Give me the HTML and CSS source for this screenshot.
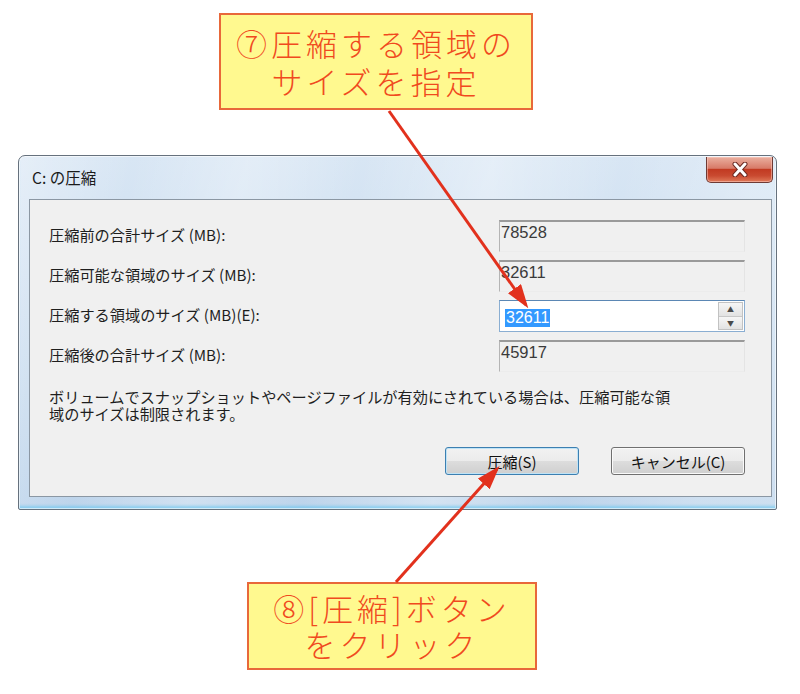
FILE: index.html
```html
<!DOCTYPE html>
<html lang="ja">
<head>
    <meta charset="utf-8">
    <link rel="stylesheet" href="styles.css">
</head>
<body>
    <div class="page">
        <div class="callout callout-top">⑦圧縮する領域の<br>サイズを指定</div>

        <div class="window">
            <div class="titlebar">
                <span class="title">C: の圧縮</span>
                <div class="close-btn">
                    <svg width="18" height="15" viewBox="0 0 18 15">
                        <path d="M4 2 L14 13 M14 2 L4 13" stroke="#6b2a22" stroke-width="5" stroke-linecap="round"/>
                        <path d="M4 2 L14 13 M14 2 L4 13" stroke="#ffffff" stroke-width="3" stroke-linecap="round"/>
                    </svg>
                </div>
            </div>

            <div class="panel">
                <div class="form">
                    <label>圧縮前の合計サイズ (MB):</label>
                    <div class="field">78528</div>

                    <label>圧縮可能な領域のサイズ (MB):</label>
                    <div class="field">32611</div>

                    <label>圧縮する領域のサイズ (MB)(E):</label>
                    <div class="spin">
                        <div class="spin-text"><span class="sel">32611</span></div>
                        <div class="spin-btns">
                            <span class="spin-up">▲</span>
                            <span class="spin-down">▼</span>
                        </div>
                    </div>

                    <label>圧縮後の合計サイズ (MB):</label>
                    <div class="field">45917</div>
                </div>

                <p class="note">ボリュームでスナップショットやページファイルが有効にされている場合は、圧縮可能な領<br>域のサイズは制限されます。</p>

                <div class="actions">
                    <div class="btn btn-default">圧縮(S)</div>
                    <div class="btn">キャンセル(C)</div>
                </div>
            </div>
        </div>

        <div class="callout callout-bottom">⑧[圧縮]ボタン<br>をクリック</div>

        <!-- pointer arrows drawn over the screenshot -->
        <svg class="arrows" width="800" height="694" viewBox="0 0 800 694">
            <defs>
                <marker id="head" viewBox="0 0 12 8" refX="10" refY="4" markerWidth="8" markerHeight="5.4" orient="auto" markerUnits="strokeWidth">
                    <path d="M0 0 L12 4 L0 8 z" fill="#e2311d"/>
                </marker>
            </defs>
            <line x1="389" y1="111" x2="526" y2="305" stroke="#e2311d" stroke-width="3" marker-end="url(#head)"/>
            <line x1="396" y1="582" x2="497" y2="469" stroke="#e2311d" stroke-width="3" marker-end="url(#head)"/>
        </svg>
    </div>
</body>
</html>
```

FILE: styles.css
```css
* {
    margin: 0;
    padding: 0;
    box-sizing: border-box;
}

body {
    background: #ffffff;
    font-family: "Noto Sans CJK JP", "Noto Sans", sans-serif;
}

.page {
    position: relative;
    width: 800px;
    height: 694px;
    padding-top: 13px;
    overflow: hidden;
}

/* yellow notes */
.callout {
    display: flex;
    align-items: center;
    justify-content: center;
    background: #fff98f;
    border: 2px solid #e8683a;
    color: #f04a1e;
    font-size: 31px;
    font-weight: 300;
    line-height: 38px;
    letter-spacing: 4px;
    text-align: center;
}

.callout-top {
    width: 314px;
    height: 97px;
    margin-left: 219px;
}

.callout-bottom {
    width: 290px;
    height: 88px;
    margin: 72px 0 0 247px;
    line-height: 36px;
}

/* dialog frame */
.window {
    display: flex;
    flex-direction: column;
    width: 759px;
    height: 355px;
    margin: 45px 0 0 18px;
    padding: 0 4px 12px 10px;
    border: 1px solid #66717d;
    border-radius: 7px 7px 2px 2px;
    background:
        linear-gradient(100deg, rgba(255,255,255,0.35) 0%, rgba(255,255,255,0) 14%, rgba(255,255,255,0.3) 28%, rgba(255,255,255,0) 42%, rgba(255,255,255,0.35) 58%, rgba(255,255,255,0) 74%, rgba(255,255,255,0.25) 90%),
        linear-gradient(#d8e6f4, #bdd4eb);
    box-shadow: inset 0 0 0 1px rgba(255,255,255,0.6), inset 0 -4px 3px -1px rgba(110,200,240,0.7);
}

.titlebar {
    display: flex;
    justify-content: space-between;
    align-items: flex-start;
    height: 43px;
    padding-left: 3px;
}

.title {
    padding-top: 11px;
    font-size: 15.5px;
    line-height: 20px;
    color: #1a1a1a;
}

.close-btn {
    display: flex;
    align-items: center;
    justify-content: center;
    width: 67px;
    height: 26px;
    margin: 1px -1px 0 0;
    border: 1px solid #6e3a34;
    border-top: none;
    border-radius: 0 0 5px 5px;
    background: linear-gradient(#eab0a0 0%, #d87a68 45%, #c23a22 50%, #c94a30 75%, #e07a5a 100%);
    box-shadow: inset 0 0 0 1px rgba(255,210,200,0.5);
}

.panel {
    flex: 1;
    padding: 20px 26px 0 19px;
    border: 1px solid #8b97a3;
    background: #f0f0f0;
    color: #1e1e1e;
    font-size: 15.2px;
}

.form {
    display: grid;
    grid-template-columns: 1fr 246px;
    grid-auto-rows: 32px;
    row-gap: 8px;
    align-items: center;
}

.form label {
    padding-bottom: 4px;
    line-height: 18px;
}

.field {
    align-self: stretch;
    padding: 1px 0 0 1px;
    border-top: 2px solid #9a9a9a;
    border-left: 1px solid #b4b4b4;
    border-right: 1px solid #e4e4e4;
    border-bottom: 1px solid #ececec;
    color: #3a3a3a;
    font-family: "Liberation Sans", sans-serif;
    font-size: 16.5px;
    line-height: 18px;
}

.spin {
    display: flex;
    align-self: stretch;
    border: 1px solid #8aaed2;
    border-top-color: #5b87b4;
    background: #ffffff;
}

.spin-text {
    flex: 1;
    padding: 4px 0 0 5px;
}

.sel {
    display: inline-block;
    padding: 0 1px;
    background: #3399ff;
    color: #ffffff;
    font-family: "Liberation Sans", sans-serif;
    font-size: 16px;
    line-height: 18px;
}

.spin-btns {
    display: flex;
    flex-direction: column;
    width: 25px;
    margin: 1px;
    border: 1px solid #c2c2c2;
}

.spin-btns span {
    flex: 1;
    display: flex;
    align-items: center;
    justify-content: center;
    background: linear-gradient(#f6f6f6, #e2e2e2);
    color: #4a4a4a;
    font-size: 7px;
}

.spin-up {
    border-bottom: 1px solid #c8c8c8;
}

.note {
    margin-top: 16px;
    line-height: 16.5px;
}

.actions {
    display: flex;
    justify-content: flex-end;
    gap: 32px;
    margin-top: 26px;
}

.btn {
    display: flex;
    align-items: center;
    justify-content: center;
    width: 134px;
    height: 28px;
    border: 1px solid #707070;
    border-radius: 3px;
    background: linear-gradient(#f2f2f2 0%, #ebebeb 50%, #dddddd 50%, #cfcfcf 100%);
    box-shadow: inset 0 0 0 1px #fafafa;
    color: #111111;
    font-size: 15px;
}

.btn-default {
    border-color: #3c7fb1;
    box-shadow: inset 0 0 0 1px #bfe3f6;
}

.arrows {
    position: absolute;
    top: 0;
    left: 0;
    pointer-events: none;
}
```
